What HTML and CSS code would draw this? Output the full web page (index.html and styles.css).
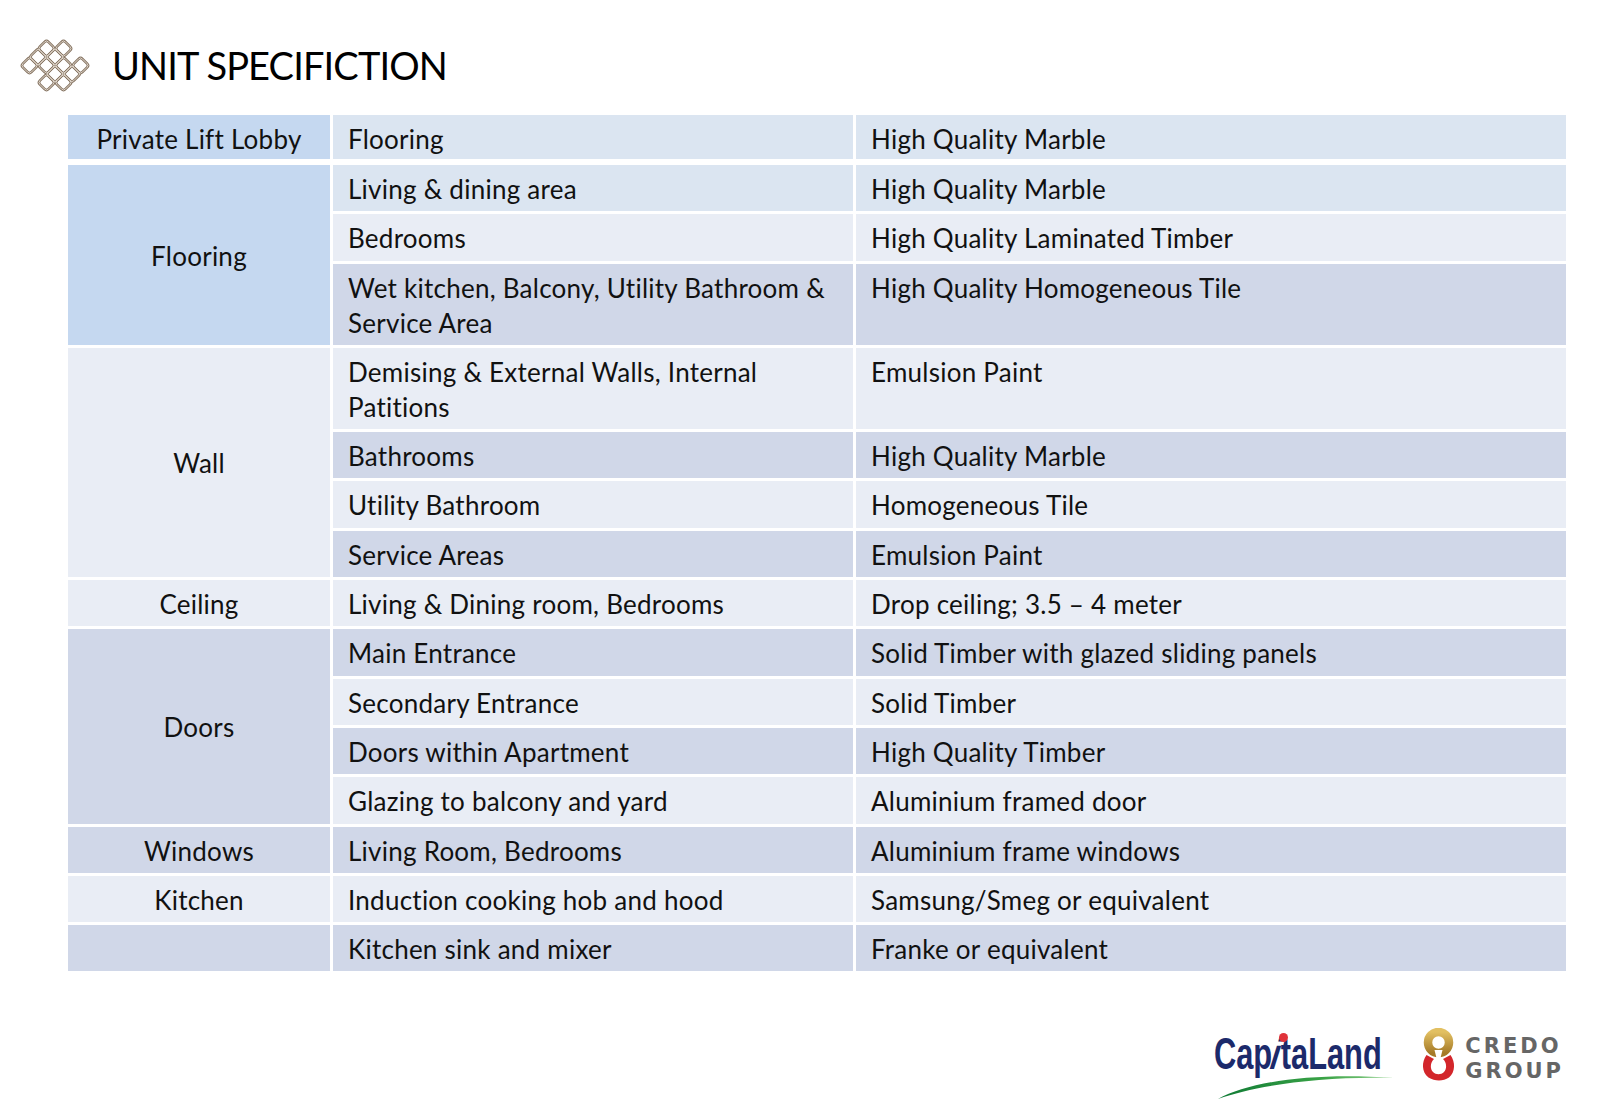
FILE: index.html
```html
<!DOCTYPE html>
<html lang="en">
<head>
<meta charset="utf-8">
<title>Unit Specifiction</title>
<link rel="stylesheet" href="styles.css">
</head>
<body>
<header class="header">
  <svg class="knot" width="70" height="56" viewBox="0 0 70 56" aria-hidden="true">
    <defs>
      <rect id="d" x="-6" y="-6" width="12" height="12" rx="2.6" transform="rotate(45)"/>
      <g id="lat">
        <use href="#d" x="9.5" y="27.5"/>
        <use href="#d" x="26.5" y="10.5"/>
        <use href="#d" x="43.5" y="10.5"/>
        <use href="#d" x="35" y="19"/>
        <use href="#d" x="26.5" y="27.5"/>
        <use href="#d" x="43.5" y="27.5"/>
        <use href="#d" x="35" y="36"/>
        <use href="#d" x="26.5" y="44.5"/>
        <use href="#d" x="43.5" y="44.5"/>
        <use href="#d" x="60.5" y="27.5"/>
        <use href="#d" x="18" y="19"/>
        <use href="#d" x="52" y="36"/>
      </g>
    </defs>
    <use href="#lat" class="knot-out"/>
    <use href="#lat" class="knot-in"/>
  </svg>
  <h1 class="title">UNIT SPECIFICTION</h1>
</header>

<table class="spec">
  <tr class="first">
    <td class="c1 blue">Private Lift Lobby</td>
    <td class="lb">Flooring</td>
    <td class="lb">High Quality Marble</td>
  </tr>
  <tr>
    <td class="c1 blue" rowspan="3">Flooring</td>
    <td class="lb">Living &amp; dining area</td>
    <td class="lb">High Quality Marble</td>
  </tr>
  <tr>
    <td class="lt">Bedrooms</td>
    <td class="lt">High Quality Laminated Timber</td>
  </tr>
  <tr>
    <td class="dk">Wet kitchen, Balcony, Utility Bathroom &amp;<br>Service Area</td>
    <td class="dk">High Quality Homogeneous Tile</td>
  </tr>
  <tr>
    <td class="c1 lt" rowspan="4">Wall</td>
    <td class="lt">Demising &amp; External Walls, Internal<br>Patitions</td>
    <td class="lt">Emulsion Paint</td>
  </tr>
  <tr>
    <td class="dk">Bathrooms</td>
    <td class="dk">High Quality Marble</td>
  </tr>
  <tr>
    <td class="lt">Utility Bathroom</td>
    <td class="lt">Homogeneous Tile</td>
  </tr>
  <tr>
    <td class="dk">Service Areas</td>
    <td class="dk">Emulsion Paint</td>
  </tr>
  <tr>
    <td class="c1 lt">Ceiling</td>
    <td class="lt">Living &amp; Dining room, Bedrooms</td>
    <td class="lt">Drop ceiling; 3.5 – 4 meter</td>
  </tr>
  <tr>
    <td class="c1 dk" rowspan="4">Doors</td>
    <td class="dk">Main Entrance</td>
    <td class="dk">Solid Timber with glazed sliding panels</td>
  </tr>
  <tr>
    <td class="lt">Secondary Entrance</td>
    <td class="lt">Solid Timber</td>
  </tr>
  <tr>
    <td class="dk">Doors within Apartment</td>
    <td class="dk">High Quality Timber</td>
  </tr>
  <tr>
    <td class="lt">Glazing to balcony and yard</td>
    <td class="lt">Aluminium framed door</td>
  </tr>
  <tr>
    <td class="c1 dk">Windows</td>
    <td class="dk">Living Room, Bedrooms</td>
    <td class="dk">Aluminium frame windows</td>
  </tr>
  <tr>
    <td class="c1 lt">Kitchen</td>
    <td class="lt">Induction cooking hob and hood</td>
    <td class="lt">Samsung/Smeg or equivalent</td>
  </tr>
  <tr>
    <td class="c1 dk"></td>
    <td class="dk">Kitchen sink and mixer</td>
    <td class="dk">Franke or equivalent</td>
  </tr>
</table>

<footer class="footer">
  <div class="capitaland">
    <span class="cl-text">Cap<span class="cl-i">i</span>taLand</span>
    <span class="cl-dot"></span>
    <svg class="cl-swoosh" width="182" height="72" viewBox="0 0 182 72" aria-hidden="true">
      <defs>
        <linearGradient id="gs" x1="0" y1="0" x2="1" y2="0">
          <stop offset="0" stop-color="#0f7a35"/>
          <stop offset="0.6" stop-color="#3aa346"/>
          <stop offset="1" stop-color="#8fd08a"/>
        </linearGradient>
      </defs>
      <path d="M4 71 C 36 53, 104 44, 180 50 C 108 48, 44 57, 4 71 Z" fill="url(#gs)"/>
    </svg>
  </div>
  <div class="credo">
    <svg class="credo-mark" width="37" height="54" viewBox="0 0 37 54" aria-hidden="true">
      <defs>
        <linearGradient id="gg" x1="0" y1="0" x2="0" y2="1">
          <stop offset="0" stop-color="#e2c062"/>
          <stop offset="1" stop-color="#a57a28"/>
        </linearGradient>
      </defs>
      <circle cx="18.5" cy="14.5" r="10.5" fill="none" stroke="url(#gg)" stroke-width="8.5"/>
      <path d="M6.5 27 C 1.5 34, 1.5 44, 8.5 49.5 C 15 53.5, 23 53.5, 29 49.5 C 35.5 44, 35.5 34, 30.5 27 L 23 31 C 27 35, 27 41, 24 44 C 21 47, 16 47, 13 44 C 10 41, 10 35, 14 31 Z" fill="#d3262b"/>
      <path d="M14.5 22 L 22.5 22 L 20.5 30 L 20.5 34 L 16.5 34 L 16.5 30 Z" fill="#fff"/>
    </svg>
    <div class="credo-text">
      <span class="credo-line">CREDO</span>
      <span class="credo-line">GROUP</span>
    </div>
  </div>
</footer>
</body>
</html>
```

FILE: styles.css
```css
html, body {
  margin: 0;
  padding: 0;
  background: #ffffff;
}

body {
  width: 1600px;
  height: 1108px;
  overflow: hidden;
  font-family: Lato, "Open Sans", "Liberation Sans", sans-serif;
  color: #111111;
}

.header {
  display: flex;
  align-items: flex-start;
  gap: 22px;
  height: 112px;
  box-sizing: border-box;
  padding: 37px 0 0 20px;
}

.knot {
  display: block;
  margin-top: 1px;
  flex: none;
}

.knot-out {
  fill: none;
  stroke: #857361;
  stroke-width: 2.7;
}

.knot-in {
  fill: none;
  stroke: #e6ddd3;
  stroke-width: 0.9;
}

.title {
  margin: 5px 0 0;
  font-family: Lato, "Open Sans", "Liberation Sans", sans-serif;
  font-weight: 400;
  font-size: 38px;
  letter-spacing: -0.85px;
  line-height: normal;
  color: #000000;
}

.spec {
  border-collapse: separate;
  border-spacing: 3px;
  margin-left: 65px;
  table-layout: fixed;
  width: 1504px;
}

.spec td {
  padding: 7px 15px 4.3px;
  font-size: 26px;
  letter-spacing: 0.25px;
  line-height: 35px;
  vertical-align: top;
  white-space: nowrap;
  background-clip: padding-box;
}

.spec td:nth-last-child(2) { width: 490px; }
.spec td:last-child { width: 680px; }

.spec td.c1 {
  width: 232px;
  text-align: center;
  vertical-align: middle;
}

.spec tr.first td {
  padding-bottom: 2px;
  border-bottom: 3px solid #ffffff;
}

.blue { background-color: #c5d8f0; }
.lb { background-color: #dbe5f1; }
.lt { background-color: #e9edf5; }
.dk { background-color: #d0d7e8; }

.footer {
  display: flex;
  justify-content: flex-end;
  align-items: flex-start;
  gap: 24px;
  margin-top: 54px;
  padding-right: 36px;
}

.capitaland {
  position: relative;
  width: 182px;
  height: 72px;
}

.cl-text {
  position: absolute;
  left: 0;
  top: 4px;
  font-family: "Liberation Sans", Arial, sans-serif;
  font-weight: 700;
  font-size: 44px;
  line-height: 44px;
  color: #1c2a6b;
  transform: scaleX(0.7);
  transform-origin: 0 0;
  white-space: nowrap;
}

.cl-i {
  display: inline-block;
  transform: skewX(-24deg);
}

.cl-dot {
  position: absolute;
  left: 65px;
  top: 5px;
  width: 9px;
  height: 9px;
  border-radius: 50%;
  background: #e0333a;
}

.cl-swoosh {
  position: absolute;
  left: 0;
  top: 0;
}

.credo {
  display: flex;
  align-items: flex-start;
  gap: 8px;
}

.credo-mark {
  display: block;
}

.credo-text {
  margin-top: 6px;
  font-family: "DejaVu Sans", "Liberation Sans", sans-serif;
  font-weight: 700;
  font-size: 21px;
  line-height: 24.5px;
  letter-spacing: 3px;
  color: #666666;
}

.credo-line {
  display: block;
}
```
